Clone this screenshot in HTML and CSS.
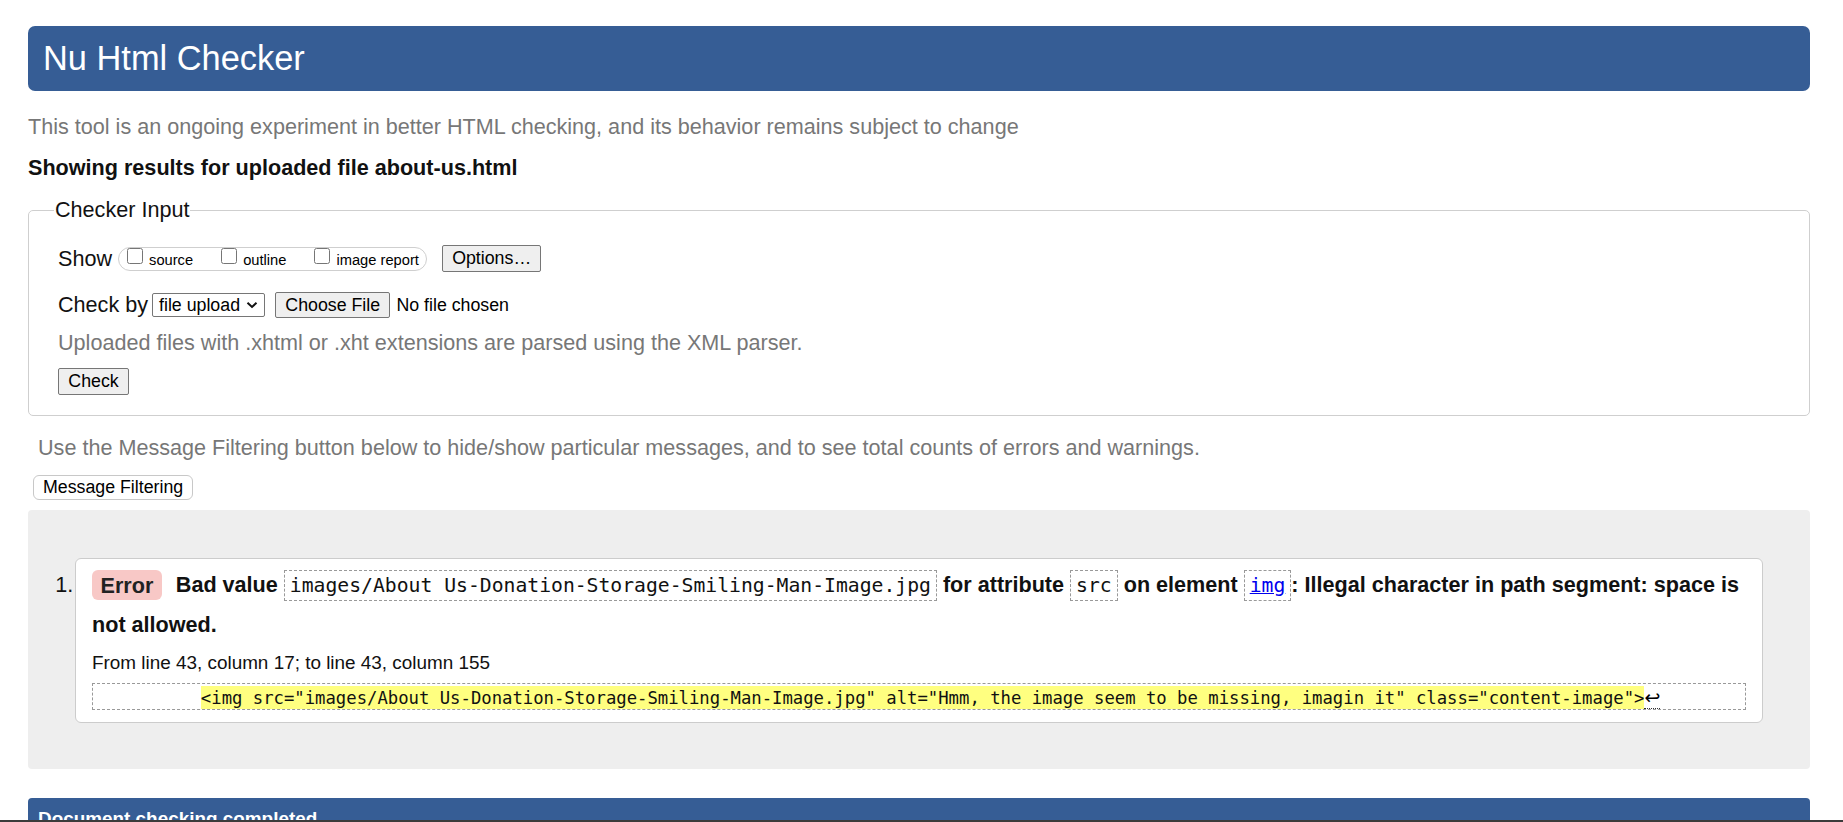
FILE: index.html
```html
<!DOCTYPE html>
<html lang="en">
<head>
<meta charset="utf-8">
<title>Showing results for about-us.html - Nu Html Checker</title>
<link rel="stylesheet" href="styles.css">
</head>
<body>
<div class="page">
  <header class="banner"><h1>Nu Html Checker</h1></header>
  <p class="intro">This tool is an ongoing experiment in better HTML checking, and its behavior remains subject to change</p>
  <p class="showing">Showing results for uploaded file about-us.html</p>

  <fieldset class="input">
    <legend>Checker Input</legend>
    <div class="row row-show">
      <span class="label">Show</span>
      <span class="pill">
        <label class="opt"><input type="checkbox"><span>source</span></label>
        <label class="opt"><input type="checkbox"><span>outline</span></label>
        <label class="opt"><input type="checkbox"><span>image report</span></label>
      </span>
      <button class="btn btn-options" type="button">Options…</button>
    </div>
    <div class="row row-check">
      <span class="label">Check by</span>
      <span class="select">file upload<svg class="chev" width="12" height="8" viewBox="0 0 12 8"><path d="M1.5 1.8 L6 6 L10.5 1.8" fill="none" stroke="#111" stroke-width="2"/></svg></span>
      <button class="btn btn-file" type="button">Choose File</button>
      <span class="nofile">No file chosen</span>
    </div>
    <p class="note">Uploaded files with .xhtml or .xht extensions are parsed using the XML parser.</p>
    <button class="btn btn-check" type="submit">Check</button>
  </fieldset>

  <p class="filter-hint">Use the Message Filtering button below to hide/show particular messages, and to see total counts of errors and warnings.</p>
  <button class="btn-filter" type="button">Message Filtering</button>

  <div class="results">
    <ol class="messages">
      <li class="msg">
        <p class="msg-text"><span class="badge">Error</span> Bad value <code>images/About Us-Donation-Storage-Smiling-Man-Image.jpg</code> for attribute <code>src</code> on element <code><a href="#">img</a></code>: Illegal character in path segment: space is not allowed.</p>
        <p class="location">From line 43, column 17; to line 43, column 155</p>
        <p class="extract"><code>          <mark>&lt;img src="images/About Us-Donation-Storage-Smiling-Man-Image.jpg" alt="Hmm, the image seem to be missing, imagin it" class="content-image"&gt;</mark><span class="lf">↩</span></code></p>
      </li>
    </ol>
  </div>

  <section class="done"><h2>Document checking completed.</h2></section>
</div>
<div class="taskbar-edge"></div>
</body>
</html>
```

FILE: styles.css
```css
html, body {
  margin: 0;
  padding: 0;
  background: #ffffff;
}

body {
  font-family: "Liberation Sans", Arial, sans-serif;
  font-size: 21.6px;
  line-height: 1.15;
  color: #000;
}

.page {
  padding: 26px 33px 0 28px;
}

.banner {
  height: 65px;
  background: #365d95;
  border-radius: 7px;
  display: flex;
  align-items: center;
  padding-left: 15px;
}

.banner h1 {
  margin: 0;
  font-size: 34.4px;
  font-weight: normal;
  line-height: 1;
  color: #fff;
}

.intro {
  margin: 24px 0 0;
  color: #777;
}

.showing {
  margin: 16px 0 0;
  font-weight: bold;
  color: #111;
}

.input {
  margin: 17px 0 0;
  border: 1px solid #cfcfcf;
  border-radius: 5px;
  padding: 23px 29px 20px 29px;
  min-width: 0;
}

.input legend {
  padding: 0 1px;
  margin-left: -4px;
  color: #111;
}

.row {
  display: flex;
  align-items: center;
}

.row-show {
  height: 27px;
}

.row-check {
  height: 26px;
  margin-top: 20px;
}

.label {
  color: #111;
}

.pill {
  display: inline-flex;
  align-items: center;
  height: 24px;
  box-sizing: border-box;
  border: 1px solid #cfcfcf;
  border-radius: 12px;
  margin-left: 6px;
  padding: 0 7px 0 8px;
  gap: 28px;
  font-size: 14.7px;
}

.opt {
  display: inline-flex;
  align-items: center;
  gap: 6px;
}

.opt input {
  width: 16px;
  height: 16px;
  margin: 0 0 6px 0;
}

.opt span {
  padding-top: 3px;
}

.btn {
  font-family: "Liberation Sans", Arial, sans-serif;
  font-size: 17.78px;
  line-height: 1;
  height: 27px;
  box-sizing: border-box;
  padding: 0 9.3px;
  background: #efefef;
  border: 1px solid #767676;
  border-radius: 2px;
  color: #000;
}

.btn-options {
  margin-left: 15px;
}

.select {
  display: inline-flex;
  align-items: center;
  height: 24px;
  box-sizing: border-box;
  margin-left: 4px;
  padding: 0 6px 0 6px;
  border: 1px solid #767676;
  border-radius: 2px;
  font-size: 17.78px;
  gap: 4px;
  background: #fff;
}

.chev {
  display: block;
  margin-left: 2px;
}

.btn-file {
  height: 26px;
  margin-left: 10px;
}

.nofile {
  margin-left: 6px;
  font-size: 17.78px;
}

.note {
  margin: 13px 0 0;
  color: #777;
}

.btn-check {
  display: block;
  margin-top: 12px;
}

.filter-hint {
  margin: 20px 0 0;
  padding-left: 10px;
  color: #777;
}

.btn-filter {
  display: block;
  margin: 14px 0 0 5px;
  height: 25px;
  box-sizing: border-box;
  padding: 0 9px;
  font-family: "Liberation Sans", Arial, sans-serif;
  font-size: 17.78px;
  line-height: 1;
  background: #fff;
  border: 1px solid #c8c8c8;
  border-radius: 6px;
  color: #000;
}

.results {
  margin-top: 10px;
  background: #eeeeee;
  border-radius: 4px;
  padding: 48px 47px 46px 47px;
}

.messages {
  margin: 0;
  padding: 0;
  list-style: decimal outside;
}

.msg {
  background: #fff;
  border: 1px solid #cccccc;
  border-radius: 6px;
  padding: 7px 16px 12px 16px;
}

.msg::marker {
  content: counter(list-item) ".\200A";
  color: #111;
}

.msg-text {
  margin: 0;
  font-weight: bold;
  line-height: 38.5px;
  color: #111;
}

.badge {
  background: #f8c8c6;
  border-radius: 6px;
  padding: 2.5px 8.5px;
  margin-right: 8px;
  color: #222;
}

.msg-text code {
  font-family: "DejaVu Sans Mono", "Liberation Mono", monospace;
  font-size: 19.73px;
  font-weight: normal;
  border: 1px dashed #999;
  padding: 3px 5px;
}

.msg-text code a {
  color: #0000ee;
  text-decoration: underline;
}

.location {
  margin: 8px 0 0;
  font-size: 18.9px;
  color: #111;
}

.extract {
  margin: 9px 0 0;
  border: 1px dashed #999;
  height: 27px;
  box-sizing: border-box;
  padding: 0 4px;
  line-height: 25px;
  white-space: pre;
  overflow: hidden;
}

.extract code {
  font-family: "DejaVu Sans Mono", "Liberation Mono", monospace;
  font-size: 17.26px;
}

.extract mark {
  background: #ffff80;
  color: #111;
  padding: 2px 0;
}

.lf {
  font-family: "DejaVu Sans", sans-serif;
  font-size: 19px;
  border-bottom: 1px dotted #333;
}

.done {
  margin-top: 29px;
  background: #365d95;
  border-radius: 4px 4px 0 0;
  padding: 10px 10px 20px;
}

.done h2 {
  margin: 0;
  font-size: 18.9px;
  font-weight: bold;
  color: #fff;
}

.taskbar-edge {
  position: fixed;
  left: 0;
  right: 0;
  bottom: 0;
  height: 2px;
  background: #3b3b3b;
}
```
